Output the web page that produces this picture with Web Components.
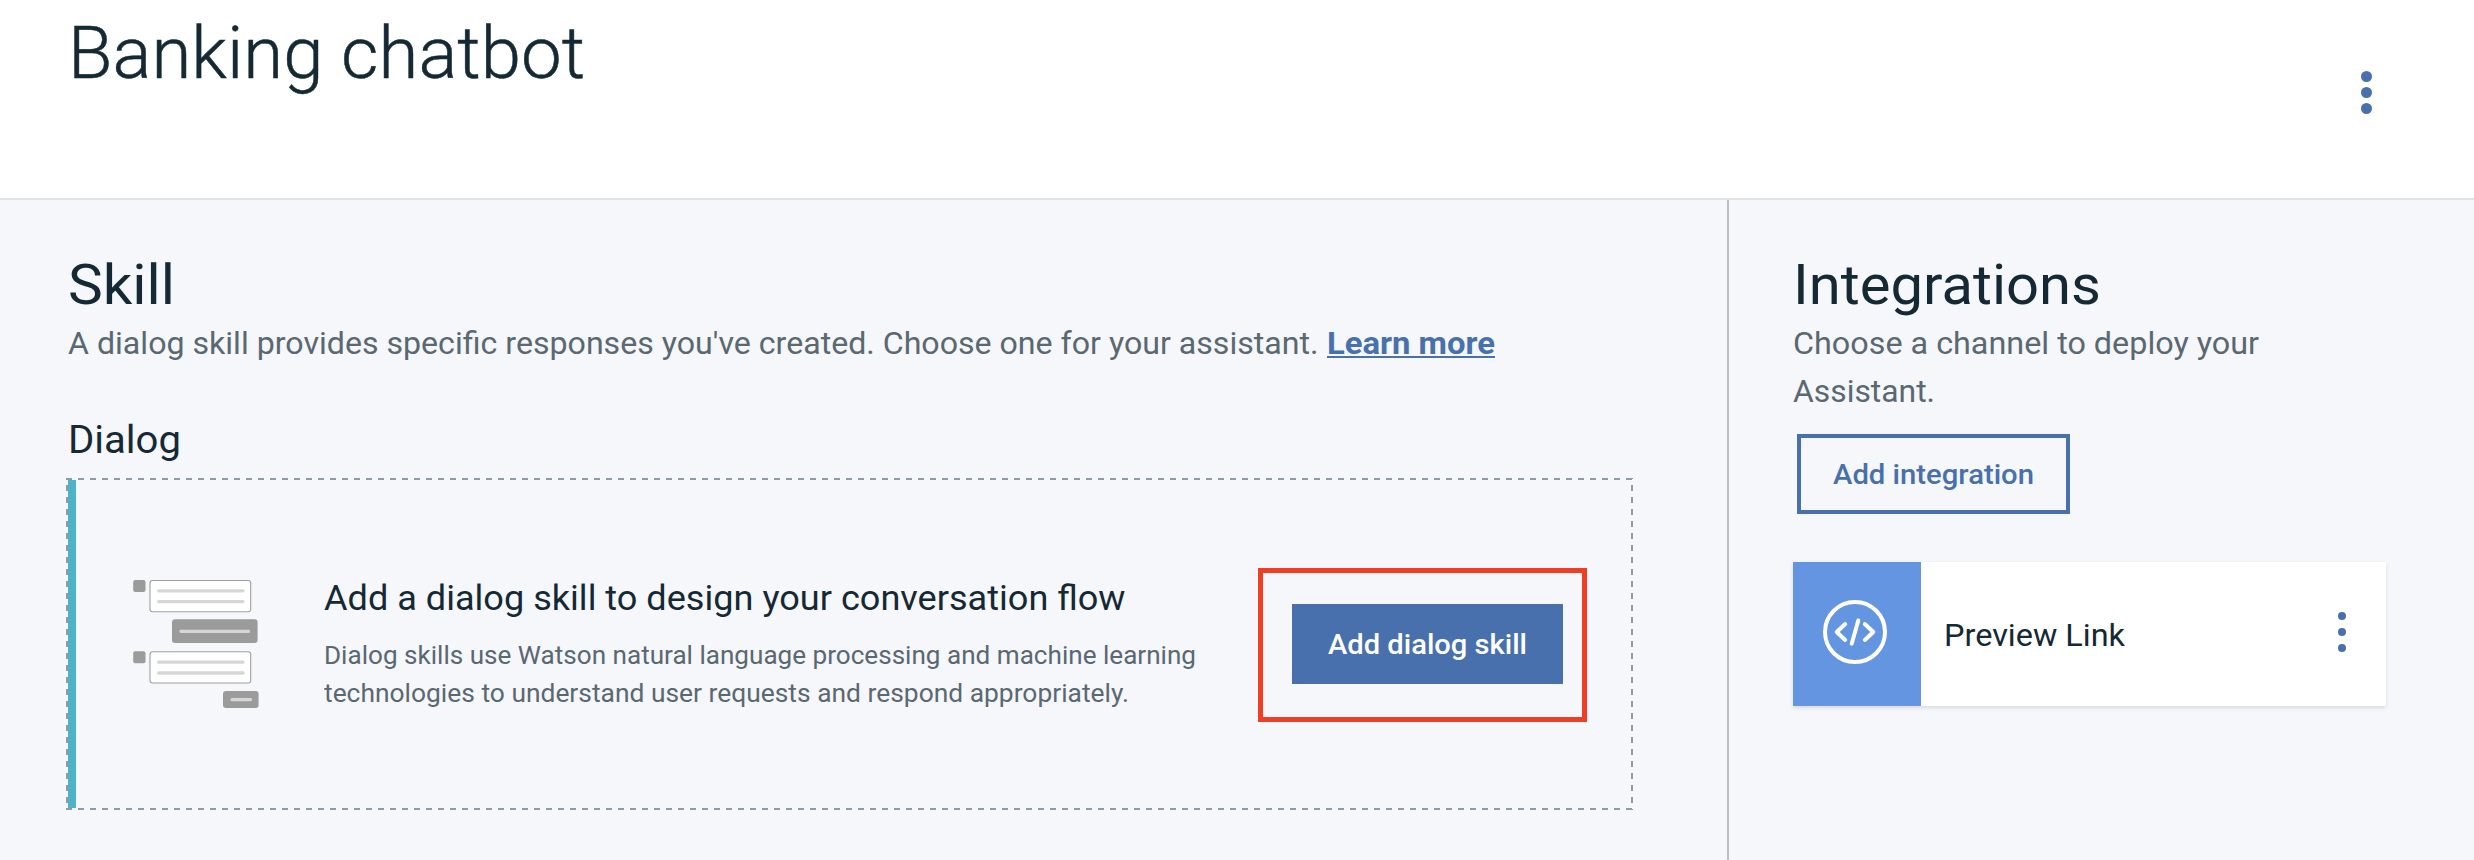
<!DOCTYPE html>
<html lang="en">
<head>
<meta charset="utf-8">
<title>Banking chatbot</title>
<style>
  body { margin: 0; background: #f5f7fb; color: #152934; font-family: Roboto, "Open Sans", sans-serif; }
</style>
</head>
<body>
<assistant-page></assistant-page>
<script>
  class BaseElement extends HTMLElement {
    constructor() {
      super();
      this.attachShadow({ mode: 'open' }).innerHTML = this.constructor.markup;
    }
  }

  // One line of text widened to the measure given in its "measure" attribute.
  class TrackedText extends BaseElement {
    static markup = `<style>
      :host { display: block; white-space: nowrap; }
      span { display: inline-block; white-space: nowrap; transform-origin: 0 50%; }
    </style><span></span>`;
    connectedCallback() {
      const span = this.shadowRoot.querySelector('span');
      span.textContent = this.getAttribute('text');
      const target = parseFloat(this.getAttribute('measure'));
      const natural = span.getBoundingClientRect().width;
      span.style.transform = 'scaleX(' + (target / natural).toFixed(5) + ')';
      this.style.width = target + 'px';
    }
  }
  customElements.define('tracked-text', TrackedText);

  class OverflowMenu extends BaseElement {
    static markup = `<style>
      :host { display: flex; flex-direction: column; align-items: center; gap: calc(16px - var(--dot)); }
      i { display: block; width: var(--dot); height: var(--dot); border-radius: 50%; background: #4870ad; }
    </style><i></i><i></i><i></i>`;
  }
  customElements.define('overflow-menu', OverflowMenu);

  class PageHeader extends BaseElement {
    static markup = `<style>
      :host { display: flex; justify-content: space-between; align-items: flex-start; box-sizing: border-box;
              height: 200px; padding: 14px 102.5px 0 68px; background: #fff; border-bottom: 2px solid #dfe3e6; }
      tracked-text { font-size: 72px; line-height: 80px; font-weight: 300; -webkit-text-stroke: 0.5px currentColor; }
      overflow-menu { --dot: 11px; margin-top: 56.5px; }
    </style>
    <tracked-text text="Banking chatbot" measure="517"></tracked-text>
    <overflow-menu></overflow-menu>`;
  }
  customElements.define('page-header', PageHeader);

  class ActionButton extends BaseElement {
    static markup = `<style>
      :host { display: flex; align-items: center; justify-content: center; box-sizing: border-box; height: 80px;
              padding-top: 2px; font-size: 27.5px; line-height: 40px; font-weight: 500; background: #4870ad; color: #fff; }
      :host([outline]) { background: transparent; color: #4870ad; border: 4px solid #4870ad; }
    </style><slot></slot>`;
  }
  customElements.define('action-button', ActionButton);

  class DialogArt extends BaseElement {
    static markup = `<style>:host { display: block; width: 128px; height: 132px; } svg { display: block; }</style>
    <svg width="128" height="132" viewBox="132 578 128 132">
      <g fill="#9b9b9b">
        <rect x="133.2" y="580" width="12.3" height="12" rx="2"/>
        <rect x="133.2" y="651.3" width="12.3" height="12" rx="2"/>
        <rect x="172" y="619.2" width="85.6" height="23.8" rx="3"/>
        <rect x="223" y="691" width="35.6" height="17" rx="3"/>
      </g>
      <g fill="#fff" stroke="#a0a0a0" stroke-width="1.1">
        <rect x="150" y="580.5" width="100.7" height="31.3" rx="2.5"/>
        <rect x="150" y="651.7" width="100.7" height="31.3" rx="2.5"/>
      </g>
      <g stroke="#d6d6d6" stroke-width="3.3" stroke-linecap="round">
        <path d="M158.7 590.8H243M158.7 601.6H243M158.7 662.2H243M158.7 673H243M181 631.3H248.5M232 699.6H250.6"/>
      </g>
    </svg>`;
  }
  customElements.define('dialog-art', DialogArt);

  class DialogCard extends BaseElement {
    // The dashed outline is drawn with gradients for an even 6px dash and 6px gap.
    static markup = `<style>
      :host { display: flex; align-items: flex-start; box-sizing: border-box; width: 1567px; height: 332px; padding: 2px;
              --h: linear-gradient(90deg, #8c9ba5 50%, transparent 50%);
              --v: linear-gradient(180deg, #8c9ba5 50%, transparent 50%);
              background: var(--h) 0 0 / 12px 2px repeat-x, var(--h) 0 100% / 12px 2px repeat-x,
                          var(--v) 0 7px / 2px 12px repeat-y, var(--v) 100% 7px / 2px 12px repeat-y; }
      .bar { width: 8px; align-self: stretch; background: #4fb3c8; }
      dialog-art { margin: 98px 0 0 56px; }
      .copy { margin: 94px 0 0 64px; width: 934px; }
      .head { font-size: 35.5px; line-height: 48px; }
      .body { font-size: 26.5px; line-height: 38px; color: #5a6872; }
      .gap { height: 14px; }
      .mark { box-sizing: border-box; width: 329px; height: 154px; margin-top: 88px; padding: 31px 19px 0 29px;
              border: 5px solid #ee3f26; }
    </style>
    <div class="bar"></div>
    <dialog-art></dialog-art>
    <div class="copy">
      <tracked-text class="head" text="Add a dialog skill to design your conversation flow" measure="801.5"></tracked-text>
      <div class="gap"></div>
      <tracked-text class="body" text="Dialog skills use Watson natural language processing and machine learning" measure="872"></tracked-text>
      <tracked-text class="body" text="technologies to understand user requests and respond appropriately." measure="805"></tracked-text>
    </div>
    <div class="mark"><action-button><tracked-text text="Add dialog skill" measure="199"></tracked-text></action-button></div>`;
  }
  customElements.define('dialog-card', DialogCard);

  class SkillPanel extends BaseElement {
    static markup = `<style>
      :host { display: block; box-sizing: border-box; width: 1727px; padding: 51px 0 0 66px; }
      .title { font-size: 55px; line-height: 68px; margin: 0 0 0 2px; }
      .intro { display: flex; margin: 0 0 0 2px; font-size: 32px; line-height: 48px; color: #5a6872; }
      .link { margin-left: 8.5px; height: 37px; border-bottom: 2px solid #4870ad; color: #4870ad; font-weight: 700; }
      .sub { font-size: 39px; line-height: 52px; margin: 47px 0 0 2px; }
      dialog-card { margin-top: 12px; }
    </style>
    <tracked-text class="title" text="Skill" measure="107"></tracked-text>
    <div class="intro">
      <tracked-text text="A dialog skill provides specific responses you've created. Choose one for your assistant." measure="1250.5"></tracked-text>
      <tracked-text class="link" text="Learn more" measure="168"></tracked-text>
    </div>
    <tracked-text class="sub" text="Dialog" measure="113"></tracked-text>
    <dialog-card></dialog-card>`;
  }
  customElements.define('skill-panel', SkillPanel);

  class IntegrationCard extends BaseElement {
    static markup = `<style>
      :host { display: flex; align-items: center; width: 593px; height: 144px; background: #fff;
              box-shadow: 0 2px 4px rgba(0,0,0,.12); }
      .tile { width: 128px; height: 144px; background: #6395e0; }
      svg { display: block; }
      tracked-text { font-size: 32px; line-height: 40px; margin: 2px 0 0 23px; }
      overflow-menu { --dot: 8px; margin: -4px 40px 0 auto; }
    </style>
    <div class="tile"><svg width="128" height="144" viewBox="1793 562 128 144" fill="none" stroke="#fff" stroke-width="4" stroke-linecap="round" stroke-linejoin="round">
      <circle cx="1855" cy="632" r="30"/>
      <path d="M1845.2 624L1836.7 632L1845.2 640M1864.8 624L1873.3 632L1864.8 640M1858.3 620.5L1851.7 643.7"/>
    </svg></div>
    <tracked-text text="Preview Link" measure="181"></tracked-text>
    <overflow-menu></overflow-menu>`;
  }
  customElements.define('integration-card', IntegrationCard);

  class IntegrationsPanel extends BaseElement {
    static markup = `<style>
      :host { display: block; flex: 1; box-sizing: border-box; padding: 51px 0 0 64px; border-left: 2px solid #bbbfc4; }
      .title { font-size: 55px; line-height: 68px; }
      .intro { font-size: 32px; line-height: 48px; color: #5a6872; }
      action-button { width: 273px; margin: 19px 0 48px 4px; }
    </style>
    <tracked-text class="title" text="Integrations" measure="308"></tracked-text>
    <tracked-text class="intro" text="Choose a channel to deploy your" measure="466"></tracked-text>
    <tracked-text class="intro" text="Assistant." measure="142"></tracked-text>
    <action-button outline><tracked-text text="Add integration" measure="201"></tracked-text></action-button>
    <integration-card></integration-card>`;
  }
  customElements.define('integrations-panel', IntegrationsPanel);

  class AssistantPage extends BaseElement {
    static markup = `<style>
      :host { display: flex; flex-direction: column; height: 860px; overflow: hidden; }
      main { display: flex; flex: 1; }
    </style>
    <page-header></page-header>
    <main><skill-panel></skill-panel><integrations-panel></integrations-panel></main>`;
  }
  customElements.define('assistant-page', AssistantPage);
</script>
</body>
</html>
